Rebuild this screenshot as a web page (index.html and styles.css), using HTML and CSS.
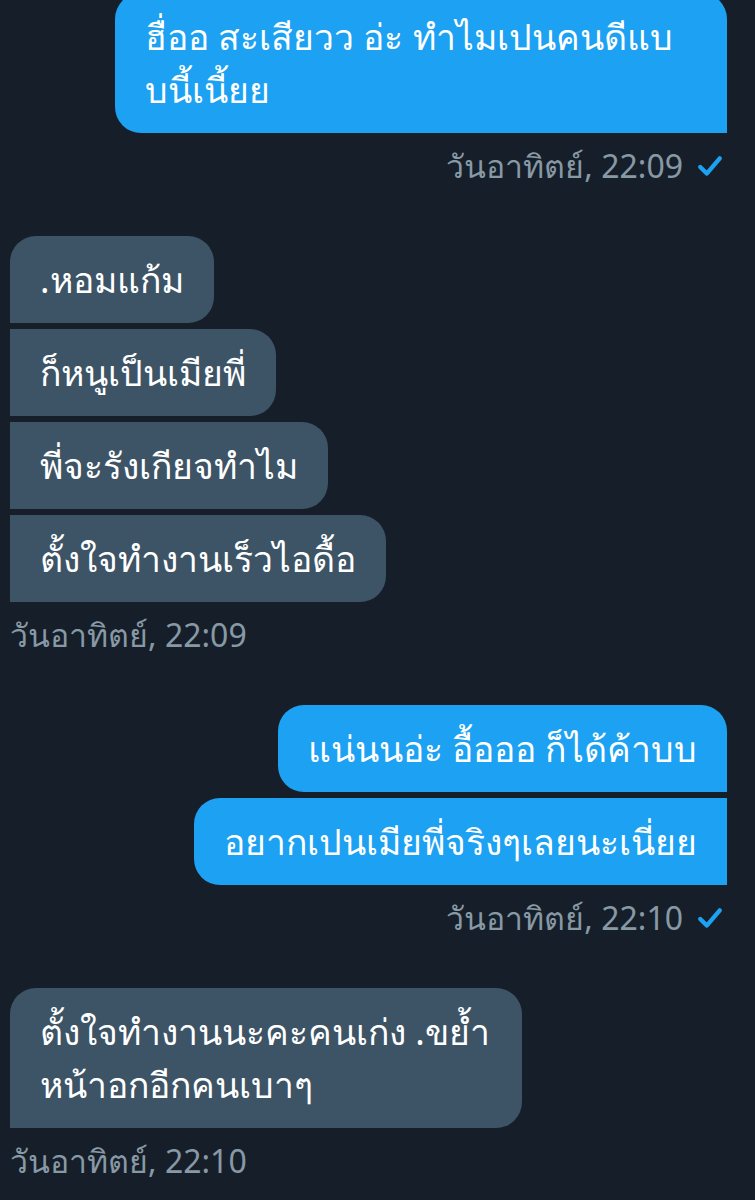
FILE: index.html
```html
<!DOCTYPE html>
<html lang="th">
<head>
    <meta charset="UTF-8">
    <meta name="viewport" content="width=device-width, initial-scale=1.0">
    <title>ข้อความ</title>
    <link rel="stylesheet" href="styles.css">
</head>
<body>
    <div class="chat">
        <div class="group sent first-group">
            <div class="bubble wide">ฮื่ออ สะเสียวว อ่ะ ทำไมเปนคนดีแบ<br>บนี้เนี้ยย</div>
            <div class="meta">วันอาทิตย์, 22:09 <svg class="check" viewBox="0 0 24 20"><path d="M3 11l6 6L21 3"/></svg></div>
        </div>

        <div class="group received">
            <div class="bubble">.หอมแก้ม</div>
            <div class="bubble">ก็หนูเป็นเมียพี่</div>
            <div class="bubble">พี่จะรังเกียจทำไม</div>
            <div class="bubble">ตั้งใจทำงานเร็วไอดื้อ</div>
            <div class="meta">วันอาทิตย์, 22:09</div>
        </div>

        <div class="group sent">
            <div class="bubble">แน่นนอ่ะ อื้อออ ก็ได้ค้าบบ</div>
            <div class="bubble">อยากเปนเมียพี่จริงๆเลยนะเนี่ยย</div>
            <div class="meta">วันอาทิตย์, 22:10 <svg class="check" viewBox="0 0 24 20"><path d="M3 11l6 6L21 3"/></svg></div>
        </div>

        <div class="group received">
            <div class="bubble wide">ตั้งใจทำงานนะคะคนเก่ง .ขย้ำ<br>หน้าอกอีกคนเบาๆ</div>
            <div class="meta">วันอาทิตย์, 22:10</div>
        </div>
    </div>
</body>
</html>
```

FILE: styles.css
```css
body {
    margin: 0;
    background-color: #161f29;
    font-family: "Noto Sans", sans-serif;
    color: #fff;
}

.chat {
    display: flex;
    flex-direction: column;
    padding: 0 28px 0 10px;
}

.group {
    display: flex;
    flex-direction: column;
    gap: 6px;
    margin-bottom: 50px;
}

.first-group {
    margin-top: -7px;
}

.sent {
    align-items: flex-end;
}

.received {
    align-items: flex-start;
}

.bubble {
    box-sizing: border-box;
    font-size: 35.5px;
    line-height: 53px;
    padding: 17px 30px;
    border-radius: 26px;
}

.sent .bubble {
    background-color: #1da1f2;
    border-top-right-radius: 0;
    border-bottom-right-radius: 0;
}

.sent .bubble:first-child {
    border-top-right-radius: 26px;
}

.sent .bubble.wide {
    width: 612px;
}

.received .bubble {
    background-color: #3d5466;
    border-top-left-radius: 0;
    border-bottom-left-radius: 0;
}

.received .bubble:first-child {
    border-top-left-radius: 26px;
}

.received .bubble.wide {
    width: 512px;
}

.meta {
    display: flex;
    align-items: center;
    gap: 14px;
    color: #8899a6;
    font-size: 32px;
    line-height: 40px;
    margin-top: 7px;
}

.sent .meta {
    padding-right: 4px;
}

.check {
    width: 26px;
    height: 22px;
    fill: none;
    stroke: #1da1f2;
    stroke-width: 4;
    stroke-linecap: round;
    stroke-linejoin: round;
}
```
